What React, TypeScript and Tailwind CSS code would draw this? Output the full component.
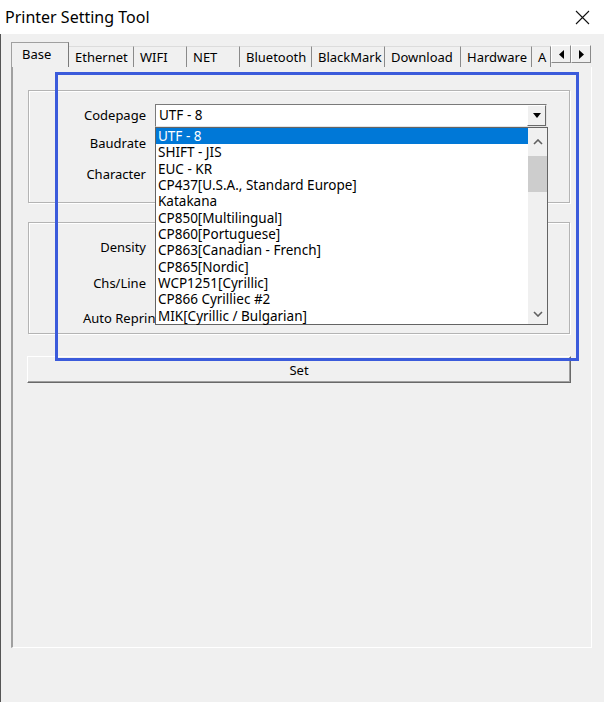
const font = { fontFamily: '"Noto Sans", "Liberation Sans", sans-serif' }

const tabs = [
  { label: 'Ethernet', w: 65 },
  { label: 'WIFI', w: 53 },
  { label: 'NET', w: 53 },
  { label: 'Bluetooth', w: 72 },
  { label: 'BlackMark', w: 73 },
  { label: 'Download', w: 76 },
  { label: 'Hardware', w: 71 },
  { label: 'A', w: 19 },
]

const codepages = [
  'UTF - 8',
  'SHIFT - JIS',
  'EUC - KR',
  'CP437[U.S.A., Standard Europe]',
  'Katakana',
  'CP850[Multilingual]',
  'CP860[Portuguese]',
  'CP863[Canadian - French]',
  'CP865[Nordic]',
  'WCP1251[Cyrillic]',
  'CP866 Cyrilliec #2',
  'MIK[Cyrillic / Bulgarian]',
]

function Chevron({ down }: { down?: boolean }) {
  return (
    <svg width="10" height="6" viewBox="0 0 10 6">
      <path
        d={down ? 'M1 1 L5 5 L9 1' : 'M1 5 L5 1 L9 5'}
        fill="none"
        stroke="#606060"
        strokeWidth="1.6"
      />
    </svg>
  )
}

function Row({ label, className = '' }: { label: string; className?: string }) {
  return (
    <div className={`flex items-center h-[22px] ${className}`}>
      <span className="w-[117px] text-right text-[13px] leading-[16px] text-black">{label}</span>
    </div>
  )
}

export default function App() {
  return (
    <div className="relative w-[604px] h-[702px] bg-[#f0f0f0] overflow-hidden" style={font}>
      {/* title bar */}
      <div className="h-[34px] bg-white flex items-center justify-between pl-[5px] pr-[14px]">
        <span className="text-[16px] leading-[20px] text-black">Printer Setting Tool</span>
        <svg width="15" height="15" viewBox="0 0 15 15">
          <path d="M1 1 L14 14 M14 1 L1 14" stroke="#111" strokeWidth="1.1" fill="none" />
        </svg>
      </div>

      {/* window body */}
      <div className="h-[668px] border-l border-[#555] pl-[10px] pt-[8px]">
        <div className="w-[581px]">
          {/* tab strip */}
          <div className="flex h-[25px] items-start overflow-hidden">
            <div className="shrink-0 w-[58px] h-[25px] border-l border-t border-r border-l-[#a0a0a0] border-t-[#a0a0a0] border-r-[#7a7a7a] pl-[10px] pt-[3px] text-[13px] leading-[16px] text-black">
              Base
            </div>
            {tabs.map(t => (
              <div
                key={t.label}
                className="shrink-0 mt-[4px] h-[21px] border-t border-r border-t-[#dcdcdc] border-r-[#8a8a8a] pl-[6px] pt-[3px] text-[13px] leading-[15px] text-black whitespace-nowrap overflow-hidden"
                style={{ width: t.w }}
              >
                {t.label}
              </div>
            ))}
          </div>

          {/* tab panel */}
          <div className="h-[581px] border-l-2 border-b border-r border-l-[#a0a0a0] border-b-white border-r-white pl-[15px] pt-[23px]">
            {/* group 1 */}
            <div className="w-[542px] h-[113px] border border-[#b4b4b4] shadow-[inset_1px_1px_0_#fff,1px_1px_0_#fff] pt-[13px]">
              <div className="flex items-center h-[22px]">
                <span className="w-[117px] text-right text-[13px] leading-[16px] text-black">Codepage</span>
                <div className="ml-[9px] w-[392px] h-[23px] flex bg-white border border-t-[#7a7a7a] border-l-[#7a7a7a] border-b-[#e3e3e3] border-r-[#e3e3e3]">
                  <span className="flex-1 pl-[3px] text-[13.5px] leading-[20px] text-black">UTF - 8</span>
                  <div className="w-[19px] h-full bg-[#f0f0f0] border border-t-white border-l-white border-b-[#696969] border-r-[#696969] flex items-center justify-center">
                    <svg width="8" height="5" viewBox="0 0 8 5">
                      <path d="M0 0 H8 L4 5 Z" fill="#000" />
                    </svg>
                  </div>
                </div>
              </div>
              <Row label="Baudrate" className="mt-[6px]" />
              <Row label="Character" className="mt-[9px]" />
            </div>

            {/* group 2 */}
            <div className="mt-[19px] w-[542px] h-[112px] border border-[#b4b4b4] shadow-[inset_1px_1px_0_#fff,1px_1px_0_#fff] pt-[13px]">
              <Row label="Density" />
              <Row label="Chs/Line" className="mt-[14px]" />
              <div className="flex items-center h-[22px] mt-[13px] pl-[54px]">
                <span className="text-[13px] leading-[16px] text-black whitespace-nowrap">Auto Reprint</span>
              </div>
            </div>

            {/* set button */}
            <div className="mt-[22px] -ml-[1px] w-[544px] h-[27px] flex items-center justify-center bg-[#f0f0f0] border border-t-white border-l-white border-b-[#696969] border-r-[#696969] shadow-[inset_-1px_-1px_0_#a0a0a0] text-[13px] leading-[16px] text-black">
              Set
            </div>
          </div>
        </div>
      </div>

      {/* tab scroll arrows */}
      <div className="absolute left-[551px] top-[45px] flex">
        <div className="w-[20px] h-[18px] bg-[#f0f0f0] border border-t-white border-l-white border-b-[#8a8a8a] border-r-[#8a8a8a] flex items-center justify-center">
          <svg width="5" height="9" viewBox="0 0 5 9"><path d="M5 0 V9 L0 4.5 Z" fill="#000" /></svg>
        </div>
        <div className="w-[20px] h-[18px] bg-[#f0f0f0] border border-t-white border-l-white border-b-[#8a8a8a] border-r-[#8a8a8a] flex items-center justify-center">
          <svg width="5" height="9" viewBox="0 0 5 9"><path d="M0 0 V9 L5 4.5 Z" fill="#000" /></svg>
        </div>
      </div>

      {/* dropdown list */}
      <div className="absolute left-[155px] top-[127px] w-[393px] h-[198px] bg-white border border-[#646464] flex">
        <div className="flex-1 flex flex-col">
          {codepages.map((c, i) => (
            <div
              key={c}
              className={`h-[16.4px] pl-[2px] text-[13.5px] leading-[16px] whitespace-nowrap ${
                i === 0 ? 'bg-[#0078d7] text-white' : 'text-black'
              }`}
            >
              {c}
            </div>
          ))}
        </div>
        <div className="w-[19px] bg-[#f0f0f0] flex flex-col items-center">
          <div className="h-[28px] flex items-center justify-center">
            <Chevron />
          </div>
          <div className="w-full h-[36px] bg-[#cdcdcd]" />
          <div className="flex-1" />
          <div className="h-[20px] flex items-center justify-center">
            <Chevron down />
          </div>
        </div>
      </div>

      {/* highlight frame */}
      <div className="absolute left-[55px] top-[72px] w-[524px] h-[289px] border-[3px] border-[#3b5bdb]" />
    </div>
  )
}
